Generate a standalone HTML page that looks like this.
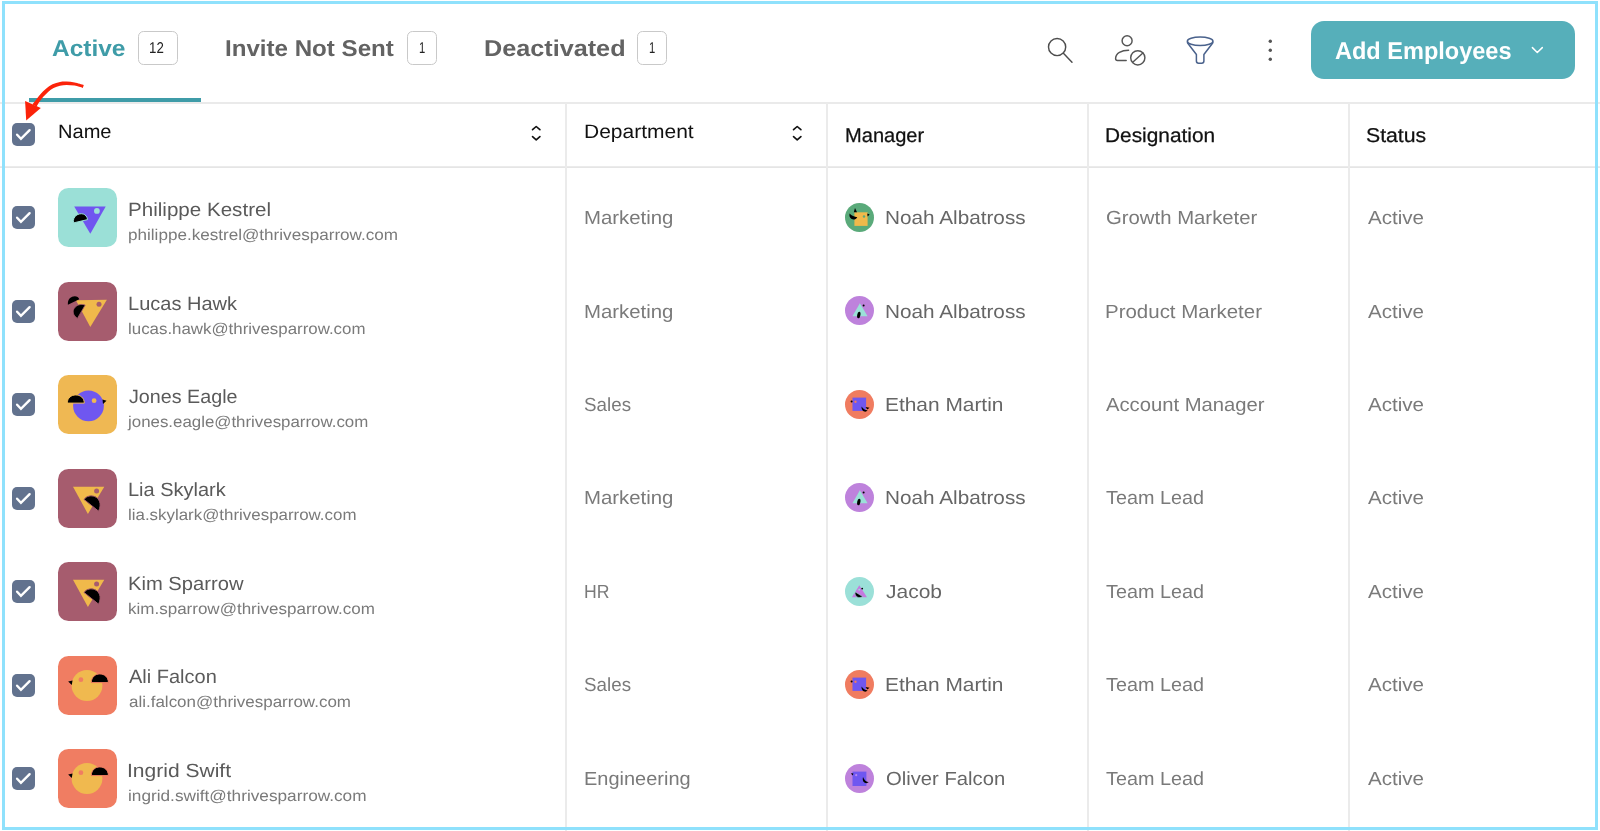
<!DOCTYPE html>
<html lang="en"><head><meta charset="utf-8"><title>Employees</title><style>

html,body{margin:0;padding:0;background:#fff;}
body{width:1600px;height:831px;position:relative;overflow:hidden;font-family:"Liberation Sans", sans-serif;}
.t{position:absolute;white-space:nowrap;line-height:1;transform-origin:0 0;}
#txt{position:absolute;left:0;top:0;width:1600px;height:831px;will-change:transform;text-rendering:geometricPrecision;}
.cb{position:absolute;display:block;overflow:visible;}
.hl{position:absolute;left:0;width:1600px;height:2px;background:#eaeaea;}
.vl{position:absolute;top:103px;width:2px;height:728px;background:#ebebeb;}
.badge{position:absolute;top:31.4px;height:31.6px;border:1px solid #c9c9c9;border-radius:5.5px;background:#fff;}
#frame{position:absolute;left:2px;top:1px;width:1590px;height:823px;border:3px solid #8FE1FC;}
#ul{position:absolute;left:29px;top:98px;width:172.3px;height:4px;background:#3F9CA8;}
#addbtn{position:absolute;left:1311px;top:21px;width:264px;height:58px;border-radius:13px;background:#56AFBA;}

</style></head><body>
<div class="hl" style="top:102px"></div><div class="hl" style="top:166px;background:linear-gradient(#eeeeee,#e2e2e2)"></div>
<div class="vl" style="left:565px"></div>
<div class="vl" style="left:826px"></div>
<div class="vl" style="left:1087px"></div>
<div class="vl" style="left:1348px"></div>
<div id="ul"></div>
<div class="badge" style="left:138px;width:37.5px"></div>
<div class="badge" style="left:406.7px;width:28.4px"></div>
<div class="badge" style="left:636.7px;width:28.6px"></div>
<div id="addbtn"></div>
<svg class="cb" style="left:1530px;top:44px" width="14" height="12" viewBox="0 0 14 12"><path d="M2.4 3.6 L7.3 8.5 L12.3 3.6" fill="none" stroke="#fff" stroke-width="1.5" stroke-linecap="round" stroke-linejoin="round"/></svg>

<svg class="cb" style="left:1040px;top:30px" width="40" height="40" viewBox="0 0 40 40" fill="none" stroke="#4d4d4d" stroke-width="1.45" stroke-linecap="round"><circle cx="17.1" cy="17.0" r="8.6"/><path d="M23.4 23.3 L32 32.2"/></svg>
<svg class="cb" style="left:1110px;top:30px" width="40" height="40" viewBox="0 0 40 40" fill="none" stroke="#555" stroke-width="1.45" stroke-linecap="round"><circle cx="17.1" cy="10.8" r="5"/><path d="M18.6 20.3 C11.5 20.3 5.6 23.2 5.6 28.6 Q5.6 30.5 7.5 30.5 H16.2"/><circle cx="27.8" cy="27.8" r="7.1"/><path d="M22.7 32.2 L32.9 23"/></svg>
<svg class="cb" style="left:1180px;top:30px" width="40" height="40" viewBox="0 0 40 40" fill="none" stroke="#4A628C" stroke-width="1.5" stroke-linejoin="round"><ellipse cx="20.15" cy="11.2" rx="12.8" ry="4.2"/><path d="M7.4 11.6 L7.6 13 L16.4 24.5 V31 Q16.4 33.2 18.6 33.2 H21.7 Q23.9 33.2 23.9 31 V24.5 L32.7 13 L32.9 11.6"/></svg>
<svg class="cb" style="left:1260px;top:30px" width="20" height="40" viewBox="0 0 20 40" fill="#555"><circle cx="10.3" cy="11.3" r="1.7"/><circle cx="10.3" cy="20.3" r="1.7"/><circle cx="10.3" cy="29.3" r="1.7"/></svg>

<svg class="cb" style="left:529px;top:124px" width="14" height="20" viewBox="0 0 14 20"><path d="M3.55 5.7 L7.2 2.5 L10.9 5.7 M3.55 12.6 L7.2 15.8 L10.9 12.6" fill="none" stroke="#111" stroke-width="1.65" stroke-linecap="round" stroke-linejoin="round"/></svg>
<svg class="cb" style="left:789.8px;top:124px" width="14" height="20" viewBox="0 0 14 20"><path d="M3.55 5.7 L7.2 2.5 L10.9 5.7 M3.55 12.6 L7.2 15.8 L10.9 12.6" fill="none" stroke="#111" stroke-width="1.65" stroke-linecap="round" stroke-linejoin="round"/></svg>
<svg class="cb" style="left:12px;top:123.4px" width="23" height="23" viewBox="0 0 23 23"><rect width="23" height="23" rx="5" fill="#62728E"/><path d="M5.1 11.7 L8.95 15.8 L17.6 7.2" fill="none" stroke="#fff" stroke-width="2.4" stroke-linecap="round" stroke-linejoin="miter"/></svg>
<svg class="cb" style="left:12px;top:205.9px" width="23" height="23" viewBox="0 0 23 23"><rect width="23" height="23" rx="5" fill="#62728E"/><path d="M5.1 11.7 L8.95 15.8 L17.6 7.2" fill="none" stroke="#fff" stroke-width="2.4" stroke-linecap="round" stroke-linejoin="miter"/></svg>
<svg class="cb" style="left:58px;top:188.0px" width="59" height="59" viewBox="0 0 59 59"><rect width="59" height="59" rx="10.5" fill="#9BE0D7"/>
<path d="M16.2 18.4 H47.7 L32.3 45.8 Z" fill="#7055F0"/>
<circle cx="38.9" cy="22.9" r="2.9" fill="#9BE0D7"/>
<path d="M15.5 34.9 C13.6 25.6 28 21.5 29.6 31.6 Z" fill="#000" stroke="#9BE0D7" stroke-width="1"/></svg>
<svg class="cb" style="left:845.2px;top:202.9px" width="29" height="29" viewBox="0 0 29 29"><circle cx="14.5" cy="14.5" r="14.5" fill="#5AAA7A"/>
<rect x="9.4" y="9.3" width="13.2" height="13.6" fill="#F0B94B"/>
<circle cx="19" cy="13.5" r="1.2" fill="#5AAA7A"/>
<path d="M22.3 10.4 L24.6 11.4 L22.6 13.4 Z" fill="#000"/>
<path d="M10 5 L12 9.3 L8.8 9.3 Z" fill="#000"/>
<path d="M4.6 10.6 C6.5 12.6 9.5 14 12.3 14.2 C10 18.4 3.2 16.6 4.6 10.6 Z" fill="#000"/></svg>
<svg class="cb" style="left:12px;top:299.5px" width="23" height="23" viewBox="0 0 23 23"><rect width="23" height="23" rx="5" fill="#62728E"/><path d="M5.1 11.7 L8.95 15.8 L17.6 7.2" fill="none" stroke="#fff" stroke-width="2.4" stroke-linecap="round" stroke-linejoin="miter"/></svg>
<svg class="cb" style="left:58px;top:281.6px" width="59" height="59" viewBox="0 0 59 59"><rect width="59" height="59" rx="10.5" fill="#A65C6E"/>
<path d="M17.9 18.2 L48.9 17.7 L32.3 45.1 Z" fill="#F0B94B"/>
<circle cx="41" cy="22.2" r="2.5" fill="#A65C6E"/>
<path d="M9.9 22.8 C8.8 13.5 20 12 21.2 17.2 Z" fill="#000"/>
<path d="M19.4 36.4 C10 30 18 20 27.2 23 Z" fill="#000" stroke="#A65C6E" stroke-width="0.8"/></svg>
<svg class="cb" style="left:845.2px;top:296.3px" width="29" height="29" viewBox="0 0 29 29"><circle cx="14.5" cy="14.5" r="14.5" fill="#BE82DC"/>
<path d="M14.9 7.3 L22.6 20.3 H7.4 Z" fill="#9BE0D8"/>
<ellipse cx="13.8" cy="19" rx="1.6" ry="3.4" transform="rotate(10 13.8 19)" fill="#000"/>
<circle cx="18.6" cy="9.5" r="1" fill="#000"/></svg>
<svg class="cb" style="left:12px;top:393.0px" width="23" height="23" viewBox="0 0 23 23"><rect width="23" height="23" rx="5" fill="#62728E"/><path d="M5.1 11.7 L8.95 15.8 L17.6 7.2" fill="none" stroke="#fff" stroke-width="2.4" stroke-linecap="round" stroke-linejoin="miter"/></svg>
<svg class="cb" style="left:58px;top:375.1px" width="59" height="59" viewBox="0 0 59 59"><rect width="59" height="59" rx="10.5" fill="#EFB853"/>
<circle cx="30.5" cy="30.8" r="15.4" fill="#6F57F0"/>
<circle cx="36.1" cy="25.7" r="2.4" fill="#EFB853"/>
<path d="M44.5 24.5 L48.5 25.8 L45 29 Z" fill="#000"/>
<path d="M9.3 28.1 C9.3 17.2 26.3 17.2 26.3 28.1 Z" fill="#000" stroke="#EFB853" stroke-width="1"/></svg>
<svg class="cb" style="left:845.2px;top:389.8px" width="29" height="29" viewBox="0 0 29 29"><circle cx="14.5" cy="14.5" r="14.5" fill="#F07C60"/>
<rect x="7.5" y="7.6" width="13.6" height="13.3" fill="#6F57F0"/>
<circle cx="10.5" cy="11.8" r="1.2" fill="#F07C60"/>
<circle cx="6.6" cy="11.5" r="1" fill="#000"/>
<path d="M16.6 16.5 C18 19 20.5 20.5 22.6 20.3 C21 23 16 21.5 16.6 16.5 Z" fill="#000"/>
<path d="M20.5 17 L24.6 17.8 L22.3 19.6 Z" fill="#000"/></svg>
<svg class="cb" style="left:12px;top:486.5px" width="23" height="23" viewBox="0 0 23 23"><rect width="23" height="23" rx="5" fill="#62728E"/><path d="M5.1 11.7 L8.95 15.8 L17.6 7.2" fill="none" stroke="#fff" stroke-width="2.4" stroke-linecap="round" stroke-linejoin="miter"/></svg>
<svg class="cb" style="left:58px;top:468.6px" width="59" height="59" viewBox="0 0 59 59"><rect width="59" height="59" rx="10.5" fill="#A65C6E"/>
<path d="M15 17.7 H46.3 L29.9 44.9 Z" fill="#F0B94B"/>
<circle cx="38.6" cy="22.1" r="2.5" fill="#A65C6E"/>
<path d="M26 30.4 C32 22.5 47 28.5 40.6 42.2 Z" fill="#000" stroke="#A65C6E" stroke-width="1"/></svg>
<svg class="cb" style="left:845.2px;top:483.3px" width="29" height="29" viewBox="0 0 29 29"><circle cx="14.5" cy="14.5" r="14.5" fill="#BE82DC"/>
<path d="M14.9 7.3 L22.6 20.3 H7.4 Z" fill="#9BE0D8"/>
<ellipse cx="13.8" cy="19" rx="1.6" ry="3.4" transform="rotate(10 13.8 19)" fill="#000"/>
<circle cx="18.6" cy="9.5" r="1" fill="#000"/></svg>
<svg class="cb" style="left:12px;top:580.0px" width="23" height="23" viewBox="0 0 23 23"><rect width="23" height="23" rx="5" fill="#62728E"/><path d="M5.1 11.7 L8.95 15.8 L17.6 7.2" fill="none" stroke="#fff" stroke-width="2.4" stroke-linecap="round" stroke-linejoin="miter"/></svg>
<svg class="cb" style="left:58px;top:562.1px" width="59" height="59" viewBox="0 0 59 59"><rect width="59" height="59" rx="10.5" fill="#A65C6E"/>
<path d="M15 17.7 H46.3 L29.9 44.9 Z" fill="#F0B94B"/>
<circle cx="38.6" cy="22.1" r="2.5" fill="#A65C6E"/>
<path d="M26 30.4 C32 22.5 47 28.5 40.6 42.2 Z" fill="#000" stroke="#A65C6E" stroke-width="1"/></svg>
<svg class="cb" style="left:845.2px;top:576.8px" width="29" height="29" viewBox="0 0 29 29"><circle cx="14.5" cy="14.5" r="14.5" fill="#9BE0D8"/>
<path d="M14.3 8.2 L22 20.2 H6.9 Z" fill="#C57AE0"/>
<circle cx="14.2" cy="12.7" r="0.9" fill="#9BE0D8"/>
<circle cx="17.2" cy="11.6" r="0.9" fill="#000"/>
<path d="M10.3 15 L17.6 19.6 C14 22 9 19.5 10.3 15 Z" fill="#000" stroke="#9BE0D8" stroke-width="0.6"/></svg>
<svg class="cb" style="left:12px;top:673.6px" width="23" height="23" viewBox="0 0 23 23"><rect width="23" height="23" rx="5" fill="#62728E"/><path d="M5.1 11.7 L8.95 15.8 L17.6 7.2" fill="none" stroke="#fff" stroke-width="2.4" stroke-linecap="round" stroke-linejoin="miter"/></svg>
<svg class="cb" style="left:58px;top:655.7px" width="59" height="59" viewBox="0 0 59 59"><rect width="59" height="59" rx="10.5" fill="#F07D62"/>
<circle cx="29" cy="29.5" r="15.4" fill="#F0B94F"/>
<circle cx="22.9" cy="23.7" r="2.4" fill="#F07D62"/>
<path d="M10.2 25.5 L14.5 24.5 L13.8 29 Z" fill="#000"/>
<path d="M33.3 26.6 C33.3 15 50.4 15 50.4 26.6 Z" fill="#000" stroke="#F07D62" stroke-width="1"/></svg>
<svg class="cb" style="left:845.2px;top:670.3px" width="29" height="29" viewBox="0 0 29 29"><circle cx="14.5" cy="14.5" r="14.5" fill="#F07C60"/>
<rect x="7.5" y="7.6" width="13.6" height="13.3" fill="#6F57F0"/>
<circle cx="10.5" cy="11.8" r="1.2" fill="#F07C60"/>
<circle cx="6.6" cy="11.5" r="1" fill="#000"/>
<path d="M16.6 16.5 C18 19 20.5 20.5 22.6 20.3 C21 23 16 21.5 16.6 16.5 Z" fill="#000"/>
<path d="M20.5 17 L24.6 17.8 L22.3 19.6 Z" fill="#000"/></svg>
<svg class="cb" style="left:12px;top:766.9px" width="23" height="23" viewBox="0 0 23 23"><rect width="23" height="23" rx="5" fill="#62728E"/><path d="M5.1 11.7 L8.95 15.8 L17.6 7.2" fill="none" stroke="#fff" stroke-width="2.4" stroke-linecap="round" stroke-linejoin="miter"/></svg>
<svg class="cb" style="left:58px;top:749.0px" width="59" height="59" viewBox="0 0 59 59"><rect width="59" height="59" rx="10.5" fill="#F07D62"/>
<circle cx="29" cy="29.5" r="15.4" fill="#F0B94F"/>
<circle cx="22.9" cy="23.7" r="2.4" fill="#F07D62"/>
<path d="M10.2 25.5 L14.5 24.5 L13.8 29 Z" fill="#000"/>
<path d="M33.3 26.6 C33.3 15 50.4 15 50.4 26.6 Z" fill="#000" stroke="#F07D62" stroke-width="1"/></svg>
<svg class="cb" style="left:845.2px;top:763.8px" width="29" height="29" viewBox="0 0 29 29"><circle cx="14.5" cy="14.5" r="14.5" fill="#BE82DC"/>
<rect x="7.5" y="7.6" width="13.9" height="14.4" fill="#6F57F0"/>
<circle cx="11.2" cy="11.2" r="1.1" fill="#B98AF0"/>
<path d="M5.8 9.6 L8.3 9.2 L7.9 11.6 Z" fill="#000"/>
<path d="M18 13 C19 16 21.5 18 23.6 18 C22 20.5 16.5 19 18 13 Z" fill="#000"/></svg>
<div id="txt">
<div class="t" id="tab1" style="left:52.35px;top:36.62px;font-size:22.9px;color:#3F9CA8;font-weight:700;transform:scaleX(1.0690);">Active</div>
<div class="t" id="tab2" style="left:224.68px;top:36.62px;font-size:22.9px;color:#636363;font-weight:700;transform:scaleX(1.0535);">Invite Not Sent</div>
<div class="t" id="tab3" style="left:483.75px;top:36.62px;font-size:22.9px;color:#636363;font-weight:700;transform:scaleX(1.1015);">Deactivated</div>
<div class="t" id="b1" style="left:149.49px;top:41.19px;font-size:15.6px;color:#222;transform:scaleX(0.8505);">12</div>
<div class="t" id="b2" style="left:418.51px;top:41.19px;font-size:15.6px;color:#222;transform:scaleX(0.7200);">1</div>
<div class="t" id="b3" style="left:648.51px;top:41.19px;font-size:15.6px;color:#222;transform:scaleX(0.7200);">1</div>
<div class="t" id="btn" style="left:1334.54px;top:40.03px;font-size:24.3px;color:#fff;font-weight:700;transform:scaleX(0.9685);">Add Employees</div>
<div class="t" id="h1" style="left:57.88px;top:122.58px;font-size:19.4px;color:#111;transform:scaleX(1.0348);">Name</div>
<div class="t" id="h2" style="left:584.09px;top:122.58px;font-size:19.4px;color:#111;transform:scaleX(1.0821);">Department</div>
<div class="t" id="h3" style="left:844.72px;top:126.75px;font-size:19.9px;color:#111;-webkit-text-stroke:0.25px #111;transform:scaleX(1.0089);">Manager</div>
<div class="t" id="h4" style="left:1105.17px;top:126.75px;font-size:19.9px;color:#111;-webkit-text-stroke:0.25px #111;transform:scaleX(1.0488);">Designation</div>
<div class="t" id="h5" style="left:1366.42px;top:126.75px;font-size:19.9px;color:#111;-webkit-text-stroke:0.25px #111;transform:scaleX(1.0676);">Status</div>
<div class="t" id="n0" style="left:127.79px;top:200.83px;font-size:19.1px;color:#5a5a5a;transform:scaleX(1.0779);">Philippe Kestrel</div>
<div class="t" id="e0" style="left:128.28px;top:228.11px;font-size:15.7px;color:#7a7a7a;transform:scaleX(1.0895);">philippe.kestrel@thrivesparrow.com</div>
<div class="t" id="d0" style="left:583.74px;top:208.92px;font-size:19.0px;color:#7a7a7a;transform:scaleX(1.0718);">Marketing</div>
<div class="t" id="m0" style="left:885.21px;top:208.92px;font-size:19.0px;color:#666;transform:scaleX(1.0914);">Noah Albatross</div>
<div class="t" id="g0" style="left:1105.72px;top:208.92px;font-size:19.0px;color:#7a7a7a;transform:scaleX(1.0694);">Growth Marketer</div>
<div class="t" id="s0" style="left:1367.68px;top:208.92px;font-size:19.0px;color:#7a7a7a;transform:scaleX(1.0831);">Active</div>
<div class="t" id="n1" style="left:127.79px;top:294.83px;font-size:19.1px;color:#5a5a5a;transform:scaleX(1.0478);">Lucas Hawk</div>
<div class="t" id="e1" style="left:128.27px;top:322.11px;font-size:15.7px;color:#7a7a7a;transform:scaleX(1.0755);">lucas.hawk@thrivesparrow.com</div>
<div class="t" id="d1" style="left:583.74px;top:302.92px;font-size:19.0px;color:#7a7a7a;transform:scaleX(1.0718);">Marketing</div>
<div class="t" id="m1" style="left:885.21px;top:302.92px;font-size:19.0px;color:#666;transform:scaleX(1.0914);">Noah Albatross</div>
<div class="t" id="g1" style="left:1104.87px;top:302.92px;font-size:19.0px;color:#7a7a7a;transform:scaleX(1.0775);">Product Marketer</div>
<div class="t" id="s1" style="left:1367.68px;top:302.92px;font-size:19.0px;color:#7a7a7a;transform:scaleX(1.0831);">Active</div>
<div class="t" id="n2" style="left:128.56px;top:387.83px;font-size:19.1px;color:#5a5a5a;transform:scaleX(1.0328);">Jones Eagle</div>
<div class="t" id="e2" style="left:128.48px;top:415.11px;font-size:15.7px;color:#7a7a7a;transform:scaleX(1.0753);">jones.eagle@thrivesparrow.com</div>
<div class="t" id="d2" style="left:584.34px;top:395.92px;font-size:19.0px;color:#7a7a7a;transform:scaleX(0.9897);">Sales</div>
<div class="t" id="m2" style="left:885.37px;top:395.92px;font-size:19.0px;color:#666;transform:scaleX(1.0992);">Ethan Martin</div>
<div class="t" id="g2" style="left:1106.29px;top:395.92px;font-size:19.0px;color:#7a7a7a;transform:scaleX(1.0641);">Account Manager</div>
<div class="t" id="s2" style="left:1367.68px;top:395.92px;font-size:19.0px;color:#7a7a7a;transform:scaleX(1.0831);">Active</div>
<div class="t" id="n3" style="left:127.79px;top:480.83px;font-size:19.1px;color:#5a5a5a;transform:scaleX(1.0471);">Lia Skylark</div>
<div class="t" id="e3" style="left:128.27px;top:508.11px;font-size:15.7px;color:#7a7a7a;transform:scaleX(1.0774);">lia.skylark@thrivesparrow.com</div>
<div class="t" id="d3" style="left:583.74px;top:488.92px;font-size:19.0px;color:#7a7a7a;transform:scaleX(1.0718);">Marketing</div>
<div class="t" id="m3" style="left:885.21px;top:488.92px;font-size:19.0px;color:#666;transform:scaleX(1.0914);">Noah Albatross</div>
<div class="t" id="g3" style="left:1106.28px;top:488.92px;font-size:19.0px;color:#7a7a7a;transform:scaleX(1.0413);">Team Lead</div>
<div class="t" id="s3" style="left:1367.68px;top:488.92px;font-size:19.0px;color:#7a7a7a;transform:scaleX(1.0831);">Active</div>
<div class="t" id="n4" style="left:127.79px;top:574.83px;font-size:19.1px;color:#5a5a5a;transform:scaleX(1.0565);">Kim Sparrow</div>
<div class="t" id="e4" style="left:128.40px;top:602.11px;font-size:15.7px;color:#7a7a7a;transform:scaleX(1.0840);">kim.sparrow@thrivesparrow.com</div>
<div class="t" id="d4" style="left:583.92px;top:582.92px;font-size:19.0px;color:#7a7a7a;transform:scaleX(0.9284);">HR</div>
<div class="t" id="m4" style="left:886.32px;top:582.92px;font-size:19.0px;color:#666;transform:scaleX(1.1041);">Jacob</div>
<div class="t" id="g4" style="left:1106.28px;top:582.92px;font-size:19.0px;color:#7a7a7a;transform:scaleX(1.0413);">Team Lead</div>
<div class="t" id="s4" style="left:1367.68px;top:582.92px;font-size:19.0px;color:#7a7a7a;transform:scaleX(1.0831);">Active</div>
<div class="t" id="n5" style="left:129.11px;top:667.83px;font-size:19.1px;color:#5a5a5a;transform:scaleX(1.0466);">Ali Falcon</div>
<div class="t" id="e5" style="left:128.61px;top:695.11px;font-size:15.7px;color:#7a7a7a;transform:scaleX(1.0822);">ali.falcon@thrivesparrow.com</div>
<div class="t" id="d5" style="left:584.34px;top:675.92px;font-size:19.0px;color:#7a7a7a;transform:scaleX(0.9897);">Sales</div>
<div class="t" id="m5" style="left:885.37px;top:675.92px;font-size:19.0px;color:#666;transform:scaleX(1.0992);">Ethan Martin</div>
<div class="t" id="g5" style="left:1106.28px;top:675.92px;font-size:19.0px;color:#7a7a7a;transform:scaleX(1.0413);">Team Lead</div>
<div class="t" id="s5" style="left:1367.68px;top:675.92px;font-size:19.0px;color:#7a7a7a;transform:scaleX(1.0831);">Active</div>
<div class="t" id="n6" style="left:126.93px;top:761.83px;font-size:19.1px;color:#5a5a5a;transform:scaleX(1.1013);">Ingrid Swift</div>
<div class="t" id="e6" style="left:128.29px;top:789.11px;font-size:15.7px;color:#7a7a7a;transform:scaleX(1.0975);">ingrid.swift@thrivesparrow.com</div>
<div class="t" id="d6" style="left:583.64px;top:769.92px;font-size:19.0px;color:#7a7a7a;transform:scaleX(1.0512);">Engineering</div>
<div class="t" id="m6" style="left:885.59px;top:769.92px;font-size:19.0px;color:#666;transform:scaleX(1.0648);">Oliver Falcon</div>
<div class="t" id="g6" style="left:1106.28px;top:769.92px;font-size:19.0px;color:#7a7a7a;transform:scaleX(1.0413);">Team Lead</div>
<div class="t" id="s6" style="left:1367.68px;top:769.92px;font-size:19.0px;color:#7a7a7a;transform:scaleX(1.0831);">Active</div>
</div>
<svg class="cb" style="left:10px;top:70px" width="90" height="60" viewBox="0 0 90 60" fill="#FB230A"><path d="M73.8 14.9 C72.3 14.5 67.5 13.0 64.6 12.4 C61.7 11.8 59.0 11.6 56.6 11.5 C54.2 11.4 52.4 11.4 50.0 11.9 C47.6 12.4 44.8 13.2 42.5 14.3 C40.2 15.4 38.0 17.1 36.0 18.7 C34.0 20.3 32.2 22.3 30.6 24.1 C29.0 25.9 27.6 27.8 26.2 29.5 C24.9 31.2 23.1 33.7 22.5 34.5 L26.5 36.5 C27.0 35.7 28.4 33.3 29.5 31.7 C30.6 30.1 31.9 28.4 33.3 26.8 C34.7 25.2 36.4 23.4 38.1 21.9 C39.8 20.5 41.6 19.1 43.6 18.1 C45.6 17.1 47.8 16.2 50.0 15.7 C52.2 15.2 54.2 14.9 56.6 14.9 C59.0 14.9 61.9 15.1 64.6 15.6 C67.3 16.1 71.4 17.5 72.8 17.9 Z"/><path d="M15.1 31.1 L16.2 50.6 L30.8 38.1 Z"/></svg>
<div id="frame"></div>
</body></html>
